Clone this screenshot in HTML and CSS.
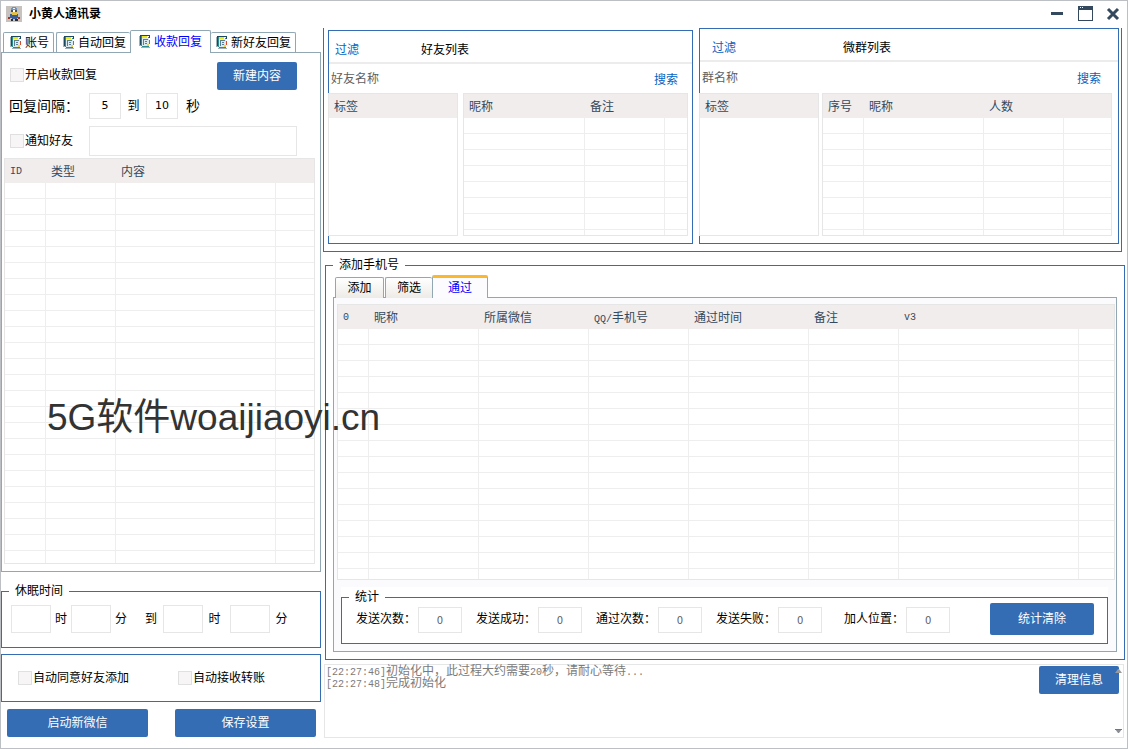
FILE: index.html
```html
<!DOCTYPE html>
<html lang="zh-CN">
<head>
<meta charset="utf-8">
<title>小黄人通讯录</title>
<link rel="stylesheet" href="styles.css">
</head>
<body>
<svg class="defs" aria-hidden="true">
  <symbol id="note" viewBox="0 0 12 14">
    <path fill="#9fb0b8" d="M0 1h2v10H0zM2 12h9v1H2z"/>
    <path fill="#1b4a5e" d="M1 0h10v1H1zM1 1h1v9H1zM10 1h1v2h-1z"/>
    <path fill="#2d8a8f" d="M2 1h1v10H2zM9 2h1v3H9zM3 11h7v1H3z"/>
    <path fill="#e9e81c" d="M3 1h5v2H3z"/>
    <path fill="#dce9ee" d="M3 3h7v8H3z"/>
    <path fill="#5a7f93" d="M4 4h5v1H4zM4 4h1v6H4zM6 6h2v1H6zM6 8h2v1H6z"/>
    <path fill="#e8d84a" d="M8 9h2v2H8z"/>
    <path fill="#e04a2a" d="M10 5h1v4h-1z"/>
  </symbol>
</svg>
<div class="window">
  <header class="titlebar">
    <svg class="app-icon" viewBox="0 0 16 16" aria-hidden="true">
      <path fill="#c6c2be" d="M0 0h16v16H0z"/>
      <path fill="#6f93bd" d="M6 1h4v1h1v2H5V2h1z"/>
      <path fill="#f3f5f8" d="M7 2h2v1H7z"/>
      <path fill="#43536b" d="M5 4h6v2H5z"/>
      <path fill="#e2c24b" d="M6 6h5v4H6z"/>
      <path fill="#fff" d="M7 4h2v2H7z"/>
      <path fill="#3c5f96" d="M4 8h2v4H4zM6 9h5v4H6zM11 8h1v4h-1z"/>
      <path fill="#a5332a" d="M2 11h2v2H2zM12 11h2v2h-2z"/>
      <path fill="#2a2c36" d="M5 13h2v2H5zM9 13h3v2H9z"/>
    </svg>
    <h1 class="title">小黄人通讯录</h1>
    <div class="window-controls">
      <button class="control" aria-label="最小化"><svg viewBox="0 0 16 16"><path fill="#34495e" d="M2 6h12v3H2z"/></svg></button>
      <button class="control" aria-label="最大化"><svg viewBox="0 0 16 16"><path fill="#34495e" fill-rule="evenodd" d="M1 0h15v15H1zM2 4v10h13V4zM3 1v1h1V1zM5 1v1h1V1z"/></svg></button>
      <button class="control" aria-label="关闭"><svg viewBox="0 0 16 16"><path stroke="#34495e" stroke-width="3" d="M3 3l10 10M13 3L3 13"/></svg></button>
    </div>
  </header>

  <main class="main">
    <section class="side">
      <div class="tabs side-tabs" role="tablist">
        <button class="tab" role="tab"><svg class="note"><use href="#note"/></svg>账号</button>
        <button class="tab tab-open" role="tab"><svg class="note"><use href="#note"/></svg>自动回复</button>
        <button class="tab tab-active" role="tab" aria-selected="true"><svg class="note"><use href="#note"/></svg>收款回复</button>
        <button class="tab tab-after" role="tab"><svg class="note"><use href="#note"/></svg>新好友回复</button>
      </div>
      <div class="pane side-pane">
        <div class="form">
          <div class="row row-top">
            <label class="check"><input type="checkbox">开启收款回复</label>
            <button class="btn btn-new">新建内容</button>
          </div>
          <div class="row row-interval">
            <span class="caption large">回复间隔：</span>
            <input class="field num" value="5" aria-label="最小间隔">
            <span class="between">到</span>
            <input class="field num" value="10" aria-label="最大间隔">
            <span class="unit large">秒</span>
          </div>
          <div class="row row-notify">
            <label class="check caption"><input type="checkbox">通知好友</label>
            <input class="field notify" aria-label="通知好友">
          </div>
        </div>
        <table class="grid side-grid">
          <colgroup><col class="w41"><col class="w70"><col class="w160"><col></colgroup>
          <thead><tr><th class="latin">ID</th><th>类型</th><th>内容</th><th></th></tr></thead>
          <tbody><tr><td></td><td></td><td></td><td></td></tr></tbody>
        </table>
      </div>
      <fieldset class="group sleep">
        <legend>休眠时间</legend>
        <div class="sleep-row">
          <input class="field" aria-label="开始时"><span>时</span>
          <input class="field" aria-label="开始分"><span>分</span>
          <span class="sleep-to">到</span>
          <input class="field" aria-label="结束时"><span class="wide">时</span>
          <input class="field" aria-label="结束分"><span class="wide">分</span>
        </div>
      </fieldset>
      <div class="group options">
        <label class="check"><input type="checkbox">自动同意好友添加</label>
        <label class="check"><input type="checkbox">自动接收转账</label>
      </div>
      <div class="actions">
        <button class="btn">启动新微信</button>
        <button class="btn">保存设置</button>
      </div>
    </section>

    <section class="content">
      <div class="lists">
        <section class="panel friends">
          <div class="panel-head"><a class="link" href="#">过滤</a><h2>好友列表</h2></div>
          <div class="search"><input placeholder="好友名称" aria-label="好友名称"><a class="link" href="#">搜索</a></div>
          <div class="tables">
            <table class="grid plain"><thead><tr><th>标签</th></tr></thead><tbody><tr><td></td></tr></tbody></table>
            <table class="grid">
              <colgroup><col class="w121"><col class="w80"><col></colgroup>
              <thead><tr><th>昵称</th><th>备注</th><th></th></tr></thead>
              <tbody><tr><td></td><td></td><td></td></tr></tbody>
            </table>
          </div>
        </section>
        <section class="panel chats">
          <div class="panel-head"><a class="link" href="#">过滤</a><h2>微群列表</h2></div>
          <div class="search"><input placeholder="群名称" aria-label="群名称"><a class="link" href="#">搜索</a></div>
          <div class="tables">
            <table class="grid plain"><thead><tr><th>标签</th></tr></thead><tbody><tr><td></td></tr></tbody></table>
            <table class="grid">
              <colgroup><col class="w41"><col class="w120"><col class="w80"><col></colgroup>
              <thead><tr><th>序号</th><th>昵称</th><th>人数</th><th></th></tr></thead>
              <tbody><tr><td></td><td></td><td></td><td></td></tr></tbody>
            </table>
          </div>
        </section>
      </div>

      <fieldset class="group phones">
        <legend>添加手机号</legend>
        <div class="tabs phone-tabs" role="tablist">
          <button class="tab" role="tab">添加</button>
          <button class="tab tab-open" role="tab">筛选</button>
          <button class="tab tab-active" role="tab" aria-selected="true">通过</button>
        </div>
        <div class="pane phone-pane">
          <table class="grid phone-grid">
            <colgroup><col class="w31"><col class="w110"><col class="w110"><col class="w100"><col class="w120"><col class="w90"><col class="w180"><col></colgroup>
            <thead><tr><th class="latin">0</th><th>昵称</th><th>所属微信</th><th><span class="latin">QQ/</span>手机号</th><th>通过时间</th><th>备注</th><th class="latin">v3</th><th></th></tr></thead>
            <tbody><tr><td></td><td></td><td></td><td></td><td></td><td></td><td></td><td></td></tr></tbody>
          </table>
          <div class="stats-wrap">
            <fieldset class="group stats">
              <legend>统计</legend>
              <div class="stats-row">
                <label>发送次数：<input class="field" value="0"></label>
                <label>发送成功：<input class="field" value="0"></label>
                <label>通过次数：<input class="field" value="0"></label>
                <label>发送失败：<input class="field" value="0"></label>
                <label class="position">加人位置：<input class="field" value="0"></label>
                <button class="btn">统计清除</button>
              </div>
            </fieldset>
          </div>
        </div>
      </fieldset>

      <div class="log" role="log">
        <div class="log-text">
          <p><span class="latin">[22:27:46]</span>初始化中，此过程大约需要<span class="latin">20</span>秒，请耐心等待<span class="latin">...</span></p>
          <p><span class="latin">[22:27:48]</span>完成初始化</p>
        </div>
        <button class="btn btn-clear">清理信息</button>
        <div class="arrows" aria-hidden="true">
          <svg viewBox="0 0 7 4"><path fill="#9a9a9a" d="M0 4l3-4h1l3 4z"/></svg>
          <svg viewBox="0 0 7 4"><path fill="#8a8f96" d="M0 0h7L4 4H3z"/><path fill="#5a7d9e" d="M0 0h7v1H0z"/></svg>
        </div>
      </div>
    </section>
  </main>
  <div class="watermark">5G软件woaijiaoyi.cn</div>
</div>
</body>
</html>
```

FILE: styles.css
```css
* { box-sizing: border-box; }

:root {
  --blue: #346db3;
  --frame: #91a7b4;
  --line: #e6e6e6;
  --cell: #eeeeee;
  --slate: #34495e;
}

body {
  margin: 0;
  background: #fff;
  color: #000;
  font: 12px/16px "Liberation Sans", "Noto Sans CJK SC", sans-serif;
}

button, input { font: inherit; color: inherit; margin: 0; }
button { padding: 0; border: 0; background: none; white-space: nowrap; }
h1, h2, p { margin: 0; font-size: 12px; font-weight: 400; }
.defs { position: absolute; width: 0; height: 0; }
.latin { font-family: "Liberation Mono", monospace; font-size: 10px; line-height: 10px; }

.window {
  position: relative;
  display: flex;
  flex-direction: column;
  min-height: 100vh;
  border: 1px solid #bcc0c4;
}

/* Title bar */
.titlebar { display: flex; align-items: center; height: 27px; padding: 0 6px 2px 5px; }
.app-icon { width: 16px; height: 16px; }
.title { margin-left: 7px; font-weight: 700; }
.window-controls { display: flex; gap: 12px; margin-left: auto; }
.control svg { display: block; width: 16px; height: 16px; }

.main { flex: 1; display: grid; grid-template-columns: 320px minmax(0, 1fr); }

/* Shared controls */
.btn { height: 28px; border-radius: 2px; background: var(--blue); color: #fff; }
.link { color: #0563c1; text-decoration: none; }
.field {
  width: 40px;
  height: 28px;
  padding: 0;
  border: 1px solid var(--line);
  background: #fff;
  text-align: center;
}
.check { display: flex; align-items: center; gap: 1px; }
.check input {
  appearance: none;
  width: 14px;
  height: 14px;
  border: 1px solid #e0e0e0;
  background: #f7f5f6;
}
.group { min-width: 0; margin: 0; padding: 0; border: 1px solid var(--blue); }
.group legend { margin-left: 7px; padding: 0 6px; }

/* Tabs */
.tabs { position: relative; z-index: 1; display: flex; align-items: flex-end; height: 23px; }
.tab {
  display: flex;
  align-items: center;
  justify-content: center;
  height: 21px;
  border: 1px solid var(--frame);
  border-bottom: 0;
  border-radius: 2px 2px 0 0;
}
.tab-open { border-right: 0; }
.tab-after { border-left: 0; }
.tab-active { height: 23px; background: #fff; color: #00f; }
.note { width: 12px; height: 14px; }
.pane { margin-top: -1px; border: 1px solid var(--frame); }

/* Data grids */
.grid { width: 100%; table-layout: fixed; border-collapse: separate; border-spacing: 0; border: 1px solid var(--line); background: #fff; }
.grid th {
  height: 24px;
  padding: 2px 0 0 5px;
  background: #f1edec;
  color: var(--slate);
  font-weight: 400;
  text-align: left;
  white-space: nowrap;
}
.grid td {
  padding: 0;
  border-right: 1px solid var(--cell);
  background: repeating-linear-gradient(#fff 0 15px, var(--cell) 15px 16px);
}
.grid td:last-child { border-right: 0; }
.grid.plain td { background: #fff; }
.w31 { width: 31px; }
.w41 { width: 41px; }
.w70 { width: 70px; }
.w80 { width: 80px; }
.w90 { width: 90px; }
.w100 { width: 100px; }
.w110 { width: 110px; }
.w120 { width: 120px; }
.w121 { width: 121px; }
.w160 { width: 160px; }
.w180 { width: 180px; }

/* Left column */
.side { display: flex; flex-direction: column; padding-top: 2px; }
.side-tabs { gap: 2px; padding-left: 2px; }
.side-tabs .tab { gap: 3px; padding: 0 4px 0 6px; }
.side-tabs .tab-active { margin-left: -2px; padding: 0 8px; }
.side-tabs .tab-after { margin-left: -2px; padding-left: 5px; }
.side-pane { flex: 1; display: flex; flex-direction: column; padding: 9px 5px 7px 2px; }
.form { padding: 0 18px 0 5px; }
.row { display: flex; align-items: center; }
.row-top { height: 28px; justify-content: space-between; padding-left: 1px; }
.row-top .check { padding-bottom: 2px; }
.btn-new { width: 80px; }
.row-interval { height: 31px; }
.row-notify { height: 30px; margin-top: 5px; padding-left: 1px; margin-bottom: 2px; }
.caption { width: 80px; flex: none; white-space: nowrap; }
.row-notify .caption { width: 79px; }
.large { font-size: 14px; }
.num { width: 32px; height: 26px; font: 11px "DejaVu Sans", sans-serif; }
.between { width: 25px; text-align: center; }
.unit { margin-left: 8px; }
.notify { flex: 1; height: 30px; }
.side-grid { flex: 1; }
.side-grid, .phone-grid { height: 100%; }

.sleep { height: 65px; margin-top: 11px; }
.sleep-row { display: flex; align-items: center; padding: 6px 0 0 9px; }
.sleep-row span { width: 20px; text-align: center; }
.sleep-row .wide { width: 27px; padding-right: 4px; }
.sleep-row .sleep-to { width: 32px; padding-left: 8px; }
.options { display: flex; align-items: center; gap: 49px; height: 48px; margin-top: 6px; padding-left: 16px; }
.actions { display: grid; grid-template-columns: 1fr 1fr; gap: 27px; padding: 7px 5px 11px 6px; }

/* Right column */
.content { display: flex; flex-direction: column; padding: 0 2px 10px; }
.lists {
  display: grid;
  grid-template-columns: minmax(0, 365fr) minmax(0, 420fr);
  gap: 6px;
  height: 224px;
  margin-right: 3px;
  padding: 0 2px 7px 4px;
  border: 1px solid var(--blue);
  border-top: 0;
}
.panel { display: flex; flex-direction: column; border: 1px solid var(--blue); padding-bottom: 7px; }
.friends { margin-top: 2px; }
.panel-head { display: flex; align-items: center; height: 33px; border-bottom: 2px solid #ececec; }
.friends .panel-head { padding: 6px 0 0 6px; }
.chats .panel-head { padding: 6px 0 0 12px; }
.friends h2 { margin-left: 62px; }
.chats h2 { margin-left: 107px; }
.search { display: flex; align-items: center; height: 29px; padding: 0 14px 0 2px; }
.search .link { padding-top: 2px; }
.chats .search { height: 31px; padding-right: 17px; }
.search input { flex: 1; min-width: 0; padding: 0; border: 0; outline: 0; }
.search input::placeholder { color: #5f5f5f; opacity: 1; }
.tables { flex: 1; display: grid; grid-template-columns: 130px minmax(0, 1fr); gap: 5px; margin: 0 4px 0 -1px; }
.chats .tables { grid-template-columns: 120px minmax(0, 1fr); gap: 3px; margin-right: 6px; }
.tables .grid { height: 100%; }

.phones { flex: 1; display: flex; flex-direction: column; margin: 5px 0 0 2px; padding: 0 7px 7px; }
.phones > legend { margin-left: 0; }
.phone-tabs { margin-top: 2px; padding-left: 2px; gap: 1px; }
.phone-tabs .tab { width: 49px; background: linear-gradient(#fff, #ecebe6); }
.phone-tabs .tab-open { width: 47px; }
.phone-tabs .tab-active { width: 56px; margin-left: -1px; border-top: 3px solid #fcb82c; background: #fcfcfe; }
.phone-pane { flex: 1; display: flex; flex-direction: column; padding: 6px 1px 7px 3px; background: #fbfbfe; }
.phone-grid { flex: 1; }
.stats-wrap { margin: 7px 7px 0 4px; padding-top: 4px; background: #fff; }
.stats legend { line-height: 12px; }
.stats-row { display: flex; align-items: center; padding: 0 13px 8px 14px; }
.stats-row label { display: flex; align-items: center; gap: 2px; margin-right: 14px; }
.stats-row .position { margin-left: 8px; }
.stats-row .field { width: 44px; height: 26px; margin-top: 2px; color: #5f5f5f; font: 10px "DejaVu Sans", sans-serif; }
.stats-row .btn { width: 104px; height: 32px; margin-left: auto; }

.log { display: flex; height: 74px; margin: 4px 1px 0; border: 1px solid var(--line); color: #7b7b7b; }
.log-text { flex: 1; padding: 0 1px; }
.log-text p { height: 12px; line-height: 12px; }
.btn-clear { width: 80px; margin-top: 1px; }
.arrows { display: flex; flex-direction: column; justify-content: space-between; width: 4px; padding: 4px 0; }
.arrows svg { width: 7px; height: 4px; margin-left: -4px; }

.watermark {
  position: absolute;
  left: 46px;
  top: 395px;
  color: #333;
  font-size: 37px;
  line-height: 44px;
  pointer-events: none;
}
```
